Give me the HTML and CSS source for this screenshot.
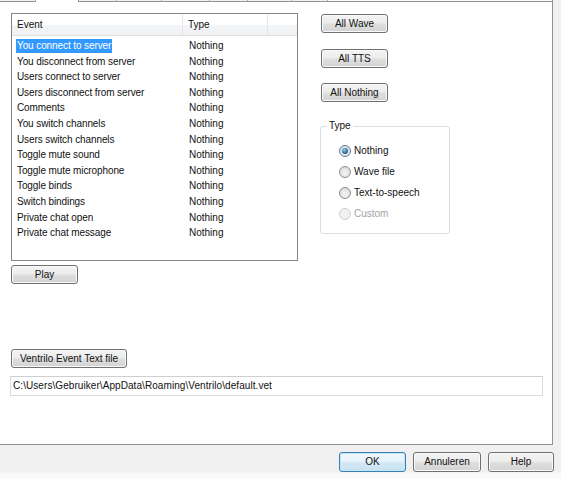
FILE: index.html
```html
<!DOCTYPE html>
<html>
<head>
<meta charset="utf-8">
<link rel="stylesheet" href="styles.css">
</head>
<body>
<div class="window">
  <div class="tabstrip">
    <div class="tab t1"></div>
    <div class="tab tsel"></div>
    <div class="tab t3"></div>
    <div class="tab t4"></div>
    <div class="tab t5"></div>
    <div class="tab t6"></div>
    <div class="tab t7"></div>
    <div class="tab t8"></div>
    <div class="tab trest"></div>
  </div>
  <div class="panel">
    <div class="toprow">
      <div class="listbox">
        <div class="lhead">
          <div class="hc c1">Event</div>
          <div class="hc c2">Type</div>
          <div class="hc c3"></div>
        </div>
        <div class="rows">
          <div class="row"><div class="c1"><span class="selected">You connect to server</span></div><div class="c2">Nothing</div></div>
          <div class="row"><div class="c1"><span>You disconnect from server</span></div><div class="c2">Nothing</div></div>
          <div class="row"><div class="c1"><span>Users connect to server</span></div><div class="c2">Nothing</div></div>
          <div class="row"><div class="c1"><span>Users disconnect from server</span></div><div class="c2">Nothing</div></div>
          <div class="row"><div class="c1"><span>Comments</span></div><div class="c2">Nothing</div></div>
          <div class="row"><div class="c1"><span>You switch channels</span></div><div class="c2">Nothing</div></div>
          <div class="row"><div class="c1"><span>Users switch channels</span></div><div class="c2">Nothing</div></div>
          <div class="row"><div class="c1"><span>Toggle mute sound</span></div><div class="c2">Nothing</div></div>
          <div class="row"><div class="c1"><span>Toggle mute microphone</span></div><div class="c2">Nothing</div></div>
          <div class="row"><div class="c1"><span>Toggle binds</span></div><div class="c2">Nothing</div></div>
          <div class="row"><div class="c1"><span>Switch bindings</span></div><div class="c2">Nothing</div></div>
          <div class="row"><div class="c1"><span>Private chat open</span></div><div class="c2">Nothing</div></div>
          <div class="row"><div class="c1"><span>Private chat message</span></div><div class="c2">Nothing</div></div>
        </div>
      </div>
      <div class="side">
        <div class="btn b-wave">All Wave</div>
        <div class="btn b-tts">All TTS</div>
        <div class="btn b-nothing">All Nothing</div>
        <div class="group">
          <div class="group-label">Type</div>
          <div class="radio-row"><span class="radio checked"><span class="dot"></span></span><span>Nothing</span></div>
          <div class="radio-row"><span class="radio"></span><span>Wave file</span></div>
          <div class="radio-row"><span class="radio"></span><span>Text-to-speech</span></div>
          <div class="radio-row disabled"><span class="radio"></span><span>Custom</span></div>
        </div>
      </div>
    </div>
    <div class="btn b-play">Play</div>
    <div class="btn b-vet">Ventrilo Event Text file</div>
    <div class="path">C:\Users\Gebruiker\AppData\Roaming\Ventrilo\default.vet</div>
  </div>
  <div class="footer">
    <div class="btn fbtn ok">OK</div>
    <div class="btn fbtn cancel">Annuleren</div>
    <div class="btn fbtn help">Help</div>
  </div>
</div>
</body>
</html>
```
FILE: styles.css
```css
* { box-sizing: border-box; }
html, body {
  margin: 0;
  padding: 0;
  background: #f0f0f0;
}
body {
  font-family: "Liberation Sans", Arial, sans-serif;
  font-size: 10px;
  color: #111;
}
.window {
  width: 561px;
  height: 479px;
  overflow: hidden;
  display: flex;
  flex-direction: column;
}
.tabstrip {
  display: flex;
  height: 2px;
  flex: none;
}
.tab {
  height: 2px;
  background: #f3f3f3;
  border-bottom: 1px solid #8e9196;
  border-right: 1px solid #a9abb0;
}
.t1 { width: 36px; }
.tsel { width: 43px; background: #fff; border-bottom: none; border-right: 1px solid #8e9196; }
.t3 { width: 38px; }
.t4 { width: 45px; }
.t5 { width: 48px; }
.t6 { width: 38px; }
.t7 { width: 44px; }
.t8 { width: 36px; }
.trest { width: 225px; background: #fafafa; border-right: 1px solid #8e9196; }
.panel {
  width: 553px;
  height: 443px;
  flex: none;
  background: #fff;
  border-right: 1px solid #8e9196;
  border-bottom: 1px solid #8e9196;
  padding: 11px 0 0 11px;
}
.toprow {
  display: flex;
  align-items: flex-start;
}
.listbox {
  width: 287px;
  height: 248px;
  border: 1px solid #82878f;
  background: #fff;
  flex: none;
}
.lhead {
  display: flex;
  height: 22px;
  background: linear-gradient(#ffffff 0%, #ffffff 50%, #f4f5f7 51%, #f0f1f3 100%);
  border-bottom: 1px solid #dfe2e6;
}
.hc {
  line-height: 22px;
}
.lhead .c1 { width: 171px; padding-left: 5px; border-right: 1px solid #e3e5e8; }
.lhead .c2 { width: 85px; padding-left: 5px; border-right: 1px solid #e3e5e8; }
.lhead .c3 { flex: 1; }
.rows {
  padding-top: 2px;
  letter-spacing: -0.1px;
}
.row {
  display: flex;
  height: 15.6px;
  line-height: 15.6px;
}
.row .c1 { width: 177px; padding-left: 4px; }
.row .c1 span { padding: 1px 1px 2px; }
.row .c2 { flex: 1; letter-spacing: 0; }
.selected {
  background: #3399ff;
  color: #fff;
}
.side {
  margin-left: 23px;
  display: flex;
  flex-direction: column;
  align-items: flex-start;
}
.btn {
  width: 67px;
  height: 19px;
  border: 1px solid #707070;
  border-radius: 3px;
  background: linear-gradient(#f3f3f3 0%, #ececec 48%, #dfdfdf 52%, #d3d3d3 100%);
  box-shadow: inset 0 0 0 1px #fafafa;
  text-align: center;
  line-height: 17px;
  white-space: nowrap;
}
.b-wave { margin-top: 1px; }
.b-tts { margin-top: 16px; }
.b-nothing { margin-top: 15px; }
.group {
  position: relative;
  margin-top: 24px;
  margin-left: -1px;
  width: 130px;
  height: 108px;
  border: 1px solid #d5dfe5;
  border-radius: 3px;
  padding: 13px 0 0 18px;
}
.group-label {
  position: absolute;
  top: -7px;
  left: 6px;
  padding: 0 2px;
  background: #fff;
  line-height: 12px;
}
.radio-row {
  display: flex;
  align-items: center;
  height: 21px;
  gap: 3px;
}
.radio {
  width: 12px;
  height: 12px;
  border-radius: 50%;
  border: 1px solid #8f8f8f;
  background: radial-gradient(circle at 50% 60%, #f4f4f4 0%, #e2e2e2 60%, #cfcfcf 100%);
  display: flex;
  align-items: center;
  justify-content: center;
  flex: none;
}
.radio.checked {
  border-color: #5b7d97;
}
.dot {
  width: 6px;
  height: 6px;
  border-radius: 50%;
  background: radial-gradient(circle at 40% 35%, #8fd0f5 0%, #2d6f9e 55%, #163e5e 100%);
}
.disabled { color: #a3a3a3; }
.disabled .radio {
  border-color: #cfcfcf;
  background: #f1f1f1;
}
.b-play { margin-top: 4px; }
.b-vet { margin-top: 65px; width: 116px; }
.path {
  margin-top: 8px;
  margin-left: -1px;
  width: 533px;
  height: 20px;
  border: 1px solid #dcdcdc;
  border-top-color: #cfcfcf;
  padding-left: 2px;
  line-height: 18px;
  white-space: nowrap;
  letter-spacing: 0.07px;
}
.footer {
  flex: 1;
  display: flex;
  justify-content: flex-end;
  align-items: flex-start;
  gap: 7px;
  padding: 7px 7px 0 0;
  background: linear-gradient(#f0f0f0 0px, #f0f0f0 27px, #f9f9f9 28px, #f9f9f9 100%);
}
.fbtn { height: 20px; line-height: 18px; }
.ok {
  border-color: #3c7fb1;
  background: linear-gradient(#f1f8fd 0%, #e6f2fa 48%, #d5e9f6 52%, #c8e2f3 100%);
  box-shadow: inset 0 0 0 1px #bfe6f9;
}
.cancel { width: 68px; }
.help { width: 66px; }
```
